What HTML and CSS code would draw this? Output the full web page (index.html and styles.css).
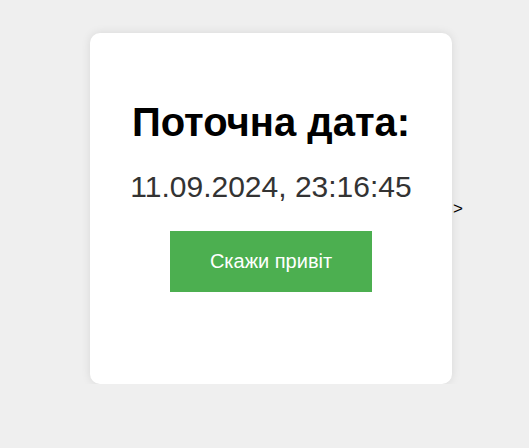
FILE: index.html
```html
<!DOCTYPE html>
<html lang="uk">
<head>
<meta charset="utf-8">
<title>Поточна дата</title>
<link rel="stylesheet" href="styles.css">
</head>
<body>
<div class="page">
  <div class="card">
    <h1 class="title">Поточна дата:</h1>
    <p class="date">11.09.2024, 23:16:45</p>
    <button class="btn">Скажи привіт</button>
  </div>
  <span class="stray">&gt;</span>
</div>
</body>
</html>
```
FILE: styles.css
```css
html, body {
  margin: 0;
  padding: 0;
  background: #efefef;
  font-family: "Liberation Sans", Arial, sans-serif;
}
.page {
  display: flex;
  align-items: center;
  padding: 33px 0 0 90px;
}
.card {
  box-sizing: border-box;
  width: 362px;
  height: 351px;
  background: #ffffff;
  border-radius: 10px;
  box-shadow: 0 0 10px rgba(0, 0, 0, 0.1);
  display: flex;
  flex-direction: column;
  align-items: center;
  padding-top: 66px;
  text-align: center;
}
.title {
  margin: 0;
  font-size: 40px;
  font-weight: bold;
  color: #000;
  line-height: 46px;
}
.date {
  margin: 24px 0 0;
  font-size: 30px;
  color: #333;
  line-height: 36px;
}
.btn {
  margin-top: 26px;
  width: 202px;
  height: 61px;
  border: none;
  background: #4caf50;
  color: #fff;
  font-family: "Liberation Sans", Arial, sans-serif;
  font-size: 20px;
  cursor: pointer;
}
.stray {
  font-size: 17px;
  color: #000;
  margin-left: 1px;
}
```
